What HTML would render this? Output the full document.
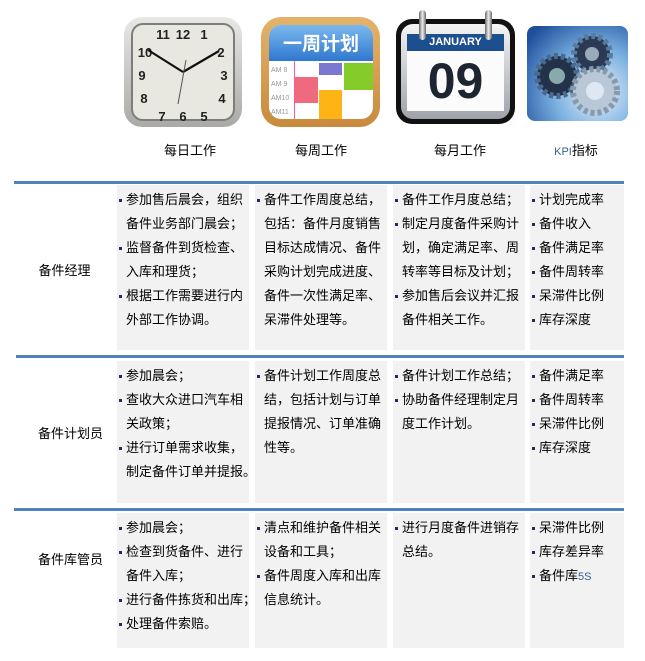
<!DOCTYPE html>
<html><head><meta charset="utf-8"><style>
body{margin:0;width:645px;height:661px;background:#fff;position:relative;overflow:hidden;font-family:"Liberation Sans","Noto Sans CJK SC",sans-serif;font-size:13px;color:#000}
.a{position:absolute}
.line{position:absolute;height:3px;background:#4f81bd;left:14px;width:610px}
.c{position:absolute;background:#f2f2f2;padding-top:3px;box-sizing:border-box}
.c div{height:24px;line-height:24px;padding-left:9px;position:relative;white-space:nowrap}
.c div.b::before{content:"";position:absolute;left:2px;top:11px;width:3px;height:3px;background:#1f2d5a}
.lab{position:absolute;width:117px;text-align:center}
.cap{position:absolute;text-align:center;width:120px;top:140px}
</style></head><body>

<!-- clock -->
<div class="a" style="left:124px;top:17px;width:118px;height:110px;border-radius:18px;background:linear-gradient(#e8e8e6,#a9aaa6);"></div>
<div class="a" style="left:131px;top:23px;width:104px;height:98px;border-radius:12px;background:#e9e8e0;border:2px solid #7d7d7a;box-sizing:border-box"></div>
<svg class="a" style="left:124px;top:17px" width="118" height="110">
<g font-family="Liberation Sans" font-weight="bold" font-size="13" fill="#222" text-anchor="middle">
<text x="59" y="22">12</text><text x="39" y="22">11</text><text x="80" y="22">1</text>
<text x="21" y="40">10</text><text x="97" y="40">2</text>
<text x="18" y="63">9</text><text x="100" y="63">3</text>
<text x="20" y="86">8</text><text x="98" y="86">4</text>
<text x="38" y="104">7</text><text x="59" y="104">6</text><text x="80" y="104">5</text></g>
<line x1="59" y1="55" x2="24" y2="33" stroke="#111" stroke-width="2.2"/>
<line x1="59" y1="55" x2="95" y2="34" stroke="#111" stroke-width="2.2"/>
<line x1="62" y1="43" x2="54" y2="87" stroke="#555" stroke-width="1"/>
</svg>

<!-- week -->
<div class="a" style="left:261px;top:17px;width:119px;height:110px;border-radius:20px;background:linear-gradient(#e3b36c,#c98a3d);"></div>
<div class="a" style="left:269px;top:25px;width:104px;height:94px;border-radius:12px;background:#fff;overflow:hidden">
 <div class="a" style="left:0;top:0;width:104px;height:36px;background:linear-gradient(#7bb8ee,#2f78cf);color:#fff;font-weight:bold;font-size:19px;line-height:36px;text-align:center;font-family:'Noto Sans CJK SC',sans-serif">一周计划</div>
 <div class="a" style="left:2px;top:39px;font-size:7px;color:#999;line-height:14px">AM 8<br>AM 9<br>AM10<br>AM11</div>
 <div class="a" style="left:25px;top:36px;width:1px;height:60px;background:#f59"></div>
 <div class="a" style="left:26px;top:52px;width:23px;height:26px;background:#f06a7e"></div>
 <div class="a" style="left:50px;top:38px;width:23px;height:12px;background:#7b78d0"></div>
 <div class="a" style="left:75px;top:38px;width:29px;height:27px;background:#83cc29"></div>
 <div class="a" style="left:50px;top:65px;width:23px;height:30px;background:#fdb414"></div>
</div>

<!-- month -->
<div class="a" style="left:396px;top:19px;width:119px;height:105px;border-radius:16px;background:#111"></div>
<div class="a" style="left:401px;top:24px;width:109px;height:95px;border-radius:12px;background:linear-gradient(#f4f4f4,#9ea3aa)"></div>
<div class="a" style="left:407px;top:34px;width:97px;height:17px;background:#1d4f8f;color:#fff;font-size:11px;font-weight:bold;text-align:center;line-height:17px">JANUARY</div>
<div class="a" style="left:407px;top:51px;width:97px;height:60px;background:#fbfbfb;color:#1d2530;font-size:50px;font-weight:bold;text-align:center;line-height:60px;font-family:'Liberation Sans Narrow','Liberation Sans',sans-serif">09</div>
<div class="a" style="left:419px;top:10px;width:7px;height:30px;border-radius:4px;background:linear-gradient(90deg,#666,#eee,#666)"></div>
<div class="a" style="left:485px;top:10px;width:7px;height:30px;border-radius:4px;background:linear-gradient(90deg,#666,#eee,#666)"></div>

<!-- KPI -->
<div class="a" style="left:527px;top:26px;width:101px;height:95px;border-radius:8px;background:radial-gradient(circle at 70% 70%,#e8f2fb,#7ab0e0 45%,#1e4f9c 90%)"></div>
<svg class="a" style="left:527px;top:26px" width="101" height="95">
<circle cx="30" cy="50" r="20" fill="#233248" stroke="#4a6a90" stroke-width="6" stroke-dasharray="4 3"/>
<circle cx="30" cy="50" r="8" fill="#8aa"/>
<circle cx="65" cy="28" r="18" fill="#2a3a52" stroke="#5a7aa0" stroke-width="6" stroke-dasharray="4 3"/>
<circle cx="65" cy="28" r="7" fill="#9ab"/>
<circle cx="68" cy="65" r="22" fill="#b8c8d8" stroke="#8899aa" stroke-width="6" stroke-dasharray="4 3"/>
<circle cx="68" cy="65" r="9" fill="#dde8f2"/>
</svg>

<div class="cap" style="left:130px">每日工作</div>
<div class="cap" style="left:261px">每周工作</div>
<div class="cap" style="left:400px">每月工作</div>
<div class="cap" style="left:516px"><span style="color:#365f91;font-size:11px">KPI</span>指标</div>

<div class="line" style="top:181px"></div>
<div class="line" style="top:355px;left:16px;width:608px"></div>
<div class="line" style="top:508px"></div>

<div class="lab" style="left:6px;top:260px">备件经理</div>
<div class="lab" style="left:12px;top:423px">备件计划员</div>
<div class="lab" style="left:12px;top:549px">备件库管员</div>

<!-- row1 -->
<div class="c" style="left:117px;top:185px;width:132px;height:165px">
<div class="b">参加售后晨会，组织</div><div>备件业务部门晨会；</div><div class="b">监督备件到货检查、</div><div>入库和理货；</div><div class="b">根据工作需要进行内</div><div>外部工作协调。</div></div>
<div class="c" style="left:255px;top:185px;width:132px;height:165px">
<div class="b">备件工作周度总结，</div><div>包括：备件月度销售</div><div>目标达成情况、备件</div><div>采购计划完成进度、</div><div>备件一次性满足率、</div><div>呆滞件处理等。</div></div>
<div class="c" style="left:393px;top:185px;width:132px;height:165px">
<div class="b">备件工作月度总结；</div><div class="b">制定月度备件采购计</div><div>划，确定满足率、周</div><div>转率等目标及计划；</div><div class="b">参加售后会议并汇报</div><div>备件相关工作。</div></div>
<div class="c" style="left:530px;top:185px;width:94px;height:165px">
<div class="b">计划完成率</div><div class="b">备件收入</div><div class="b">备件满足率</div><div class="b">备件周转率</div><div class="b">呆滞件比例</div><div class="b">库存深度</div></div>

<!-- row2 -->
<div class="c" style="left:117px;top:361px;width:132px;height:142px">
<div class="b">参加晨会；</div><div class="b">查收大众进口汽车相</div><div>关政策；</div><div class="b">进行订单需求收集，</div><div>制定备件订单并提报。</div></div>
<div class="c" style="left:255px;top:361px;width:132px;height:142px">
<div class="b">备件计划工作周度总</div><div>结，包括计划与订单</div><div>提报情况、订单准确</div><div>性等。</div></div>
<div class="c" style="left:393px;top:361px;width:132px;height:142px">
<div class="b">备件计划工作总结；</div><div class="b">协助备件经理制定月</div><div>度工作计划。</div></div>
<div class="c" style="left:530px;top:361px;width:94px;height:142px">
<div class="b">备件满足率</div><div class="b">备件周转率</div><div class="b">呆滞件比例</div><div class="b">库存深度</div></div>

<!-- row3 -->
<div class="c" style="left:117px;top:513px;width:132px;height:135px">
<div class="b">参加晨会；</div><div class="b">检查到货备件、进行</div><div>备件入库；</div><div class="b">进行备件拣货和出库；</div><div class="b">处理备件索赔。</div></div>
<div class="c" style="left:255px;top:513px;width:132px;height:135px">
<div class="b">清点和维护备件相关</div><div>设备和工具；</div><div class="b">备件周度入库和出库</div><div>信息统计。</div></div>
<div class="c" style="left:393px;top:513px;width:132px;height:135px">
<div class="b">进行月度备件进销存</div><div>总结。</div></div>
<div class="c" style="left:530px;top:513px;width:94px;height:135px">
<div class="b">呆滞件比例</div><div class="b">库存差异率</div><div class="b">备件库<span style="color:#365f91;font-size:11px">5S</span></div></div>

</body></html>
